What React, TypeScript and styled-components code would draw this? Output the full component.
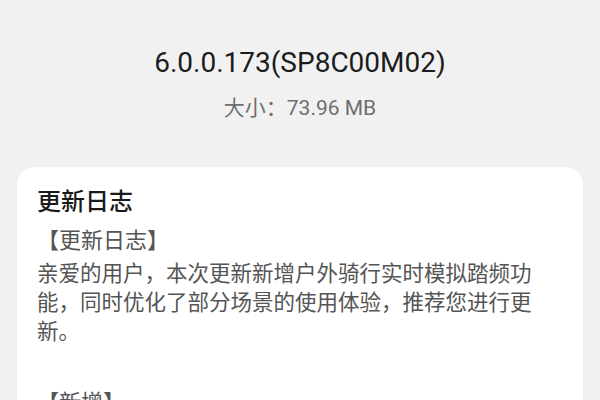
import React from "react"
import styled, { createGlobalStyle } from "styled-components"

const GlobalStyle = createGlobalStyle`
  html, body {
    margin: 0;
    padding: 0;
    background: #f1f1f1;
    font-family: Roboto, "Noto Sans CJK SC", sans-serif;
  }
`

const Page = styled.div`
  width: 600px;
  height: 400px;
  overflow: hidden;
  background: #f1f1f1;
`

const Header = styled.div`
  display: flex;
  flex-direction: column;
  align-items: center;
  padding-top: 45px;
`

const Version = styled.div`
  font-size: 28px;
  line-height: 36px;
  color: #1c1c1c;
`

const Size = styled.div`
  margin-top: 14px;
  font-size: 21px;
  line-height: 26px;
  color: #6e6e6e;
`

const Card = styled.div`
  margin: 46px 17px 0;
  padding: 17px 46px 20px 20px;
  background: #fff;
  border-radius: 18px;
`

const Title = styled.div`
  font-size: 24px;
  line-height: 32px;
  font-weight: 500;
  color: #1a1a1a;
  font-family: "Noto Sans CJK SC", sans-serif;
`

const Section = styled.div<{ $gap?: number }>`
  margin-top: ${(p) => p.$gap ?? 6}px;
  font-size: 22px;
  line-height: 32px;
  color: #555;
  font-family: "Noto Sans CJK SC", sans-serif;
`

const Body = styled.p`
  margin: 3px 0 0;
  font-size: 21.5px;
  line-height: 29px;
  color: #555;
  text-spacing-trim: space-all;
  font-family: "Noto Sans CJK SC", sans-serif;
`

const App = () => {
  return (
    <>
      <GlobalStyle />
      <Page>
        <Header>
          <Version>6.0.0.173(SP8C00M02)</Version>
          <Size>大小：73.96 MB</Size>
        </Header>
        <Card>
          <Title>更新日志</Title>
          <Section>【更新日志】</Section>
          <Body>
            亲爱的用户，本次更新新增户外骑行实时模拟踏频功能，同时优化了部分场景的使用体验，推荐您进行更新。
          </Body>
          <Section $gap={40}>【新增】</Section>
        </Card>
      </Page>
    </>
  )
}

export default App
